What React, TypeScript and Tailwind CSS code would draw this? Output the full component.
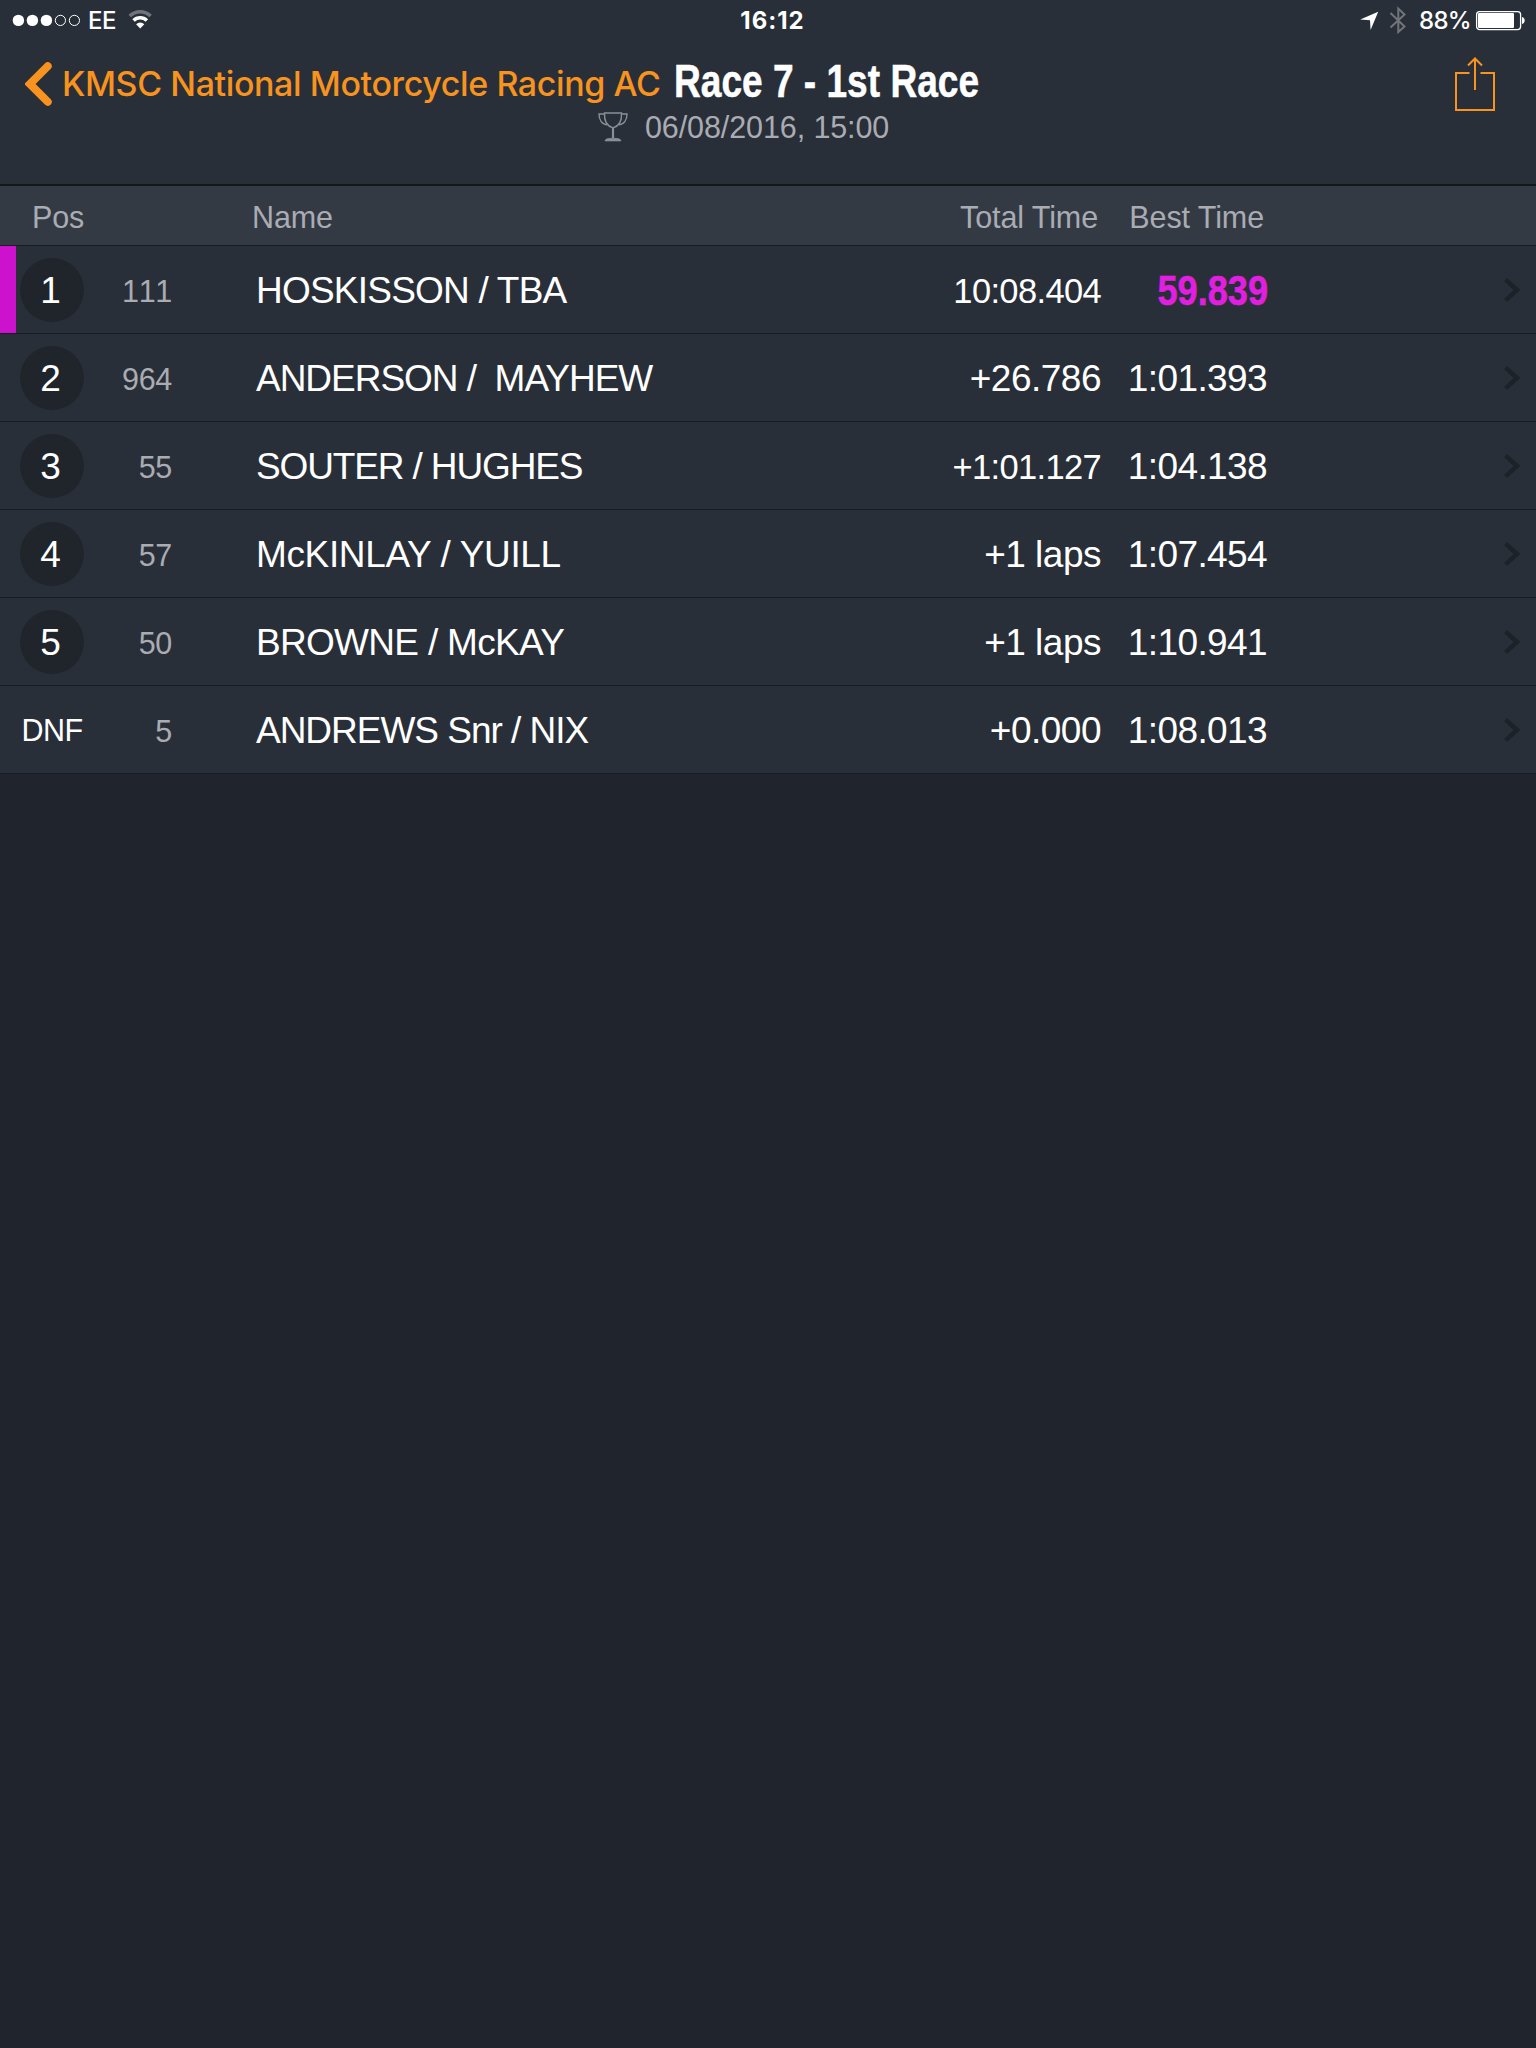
interface Result {
  pos: string;
  num: string;
  name: string;
  tracking: string;
  total: string;
  best: string;
  fastest?: boolean;
  small?: boolean;
}

const results: Result[] = [
  { pos: "1", num: "111", name: "HOSKISSON / TBA", tracking: "tracking-[-0.78px]", total: "10:08.404", best: "59.839", fastest: true, small: true },
  { pos: "2", num: "964", name: "ANDERSON /  MAYHEW", tracking: "tracking-[-1.02px]", total: "+26.786", best: "1:01.393" },
  { pos: "3", num: "55", name: "SOUTER / HUGHES", tracking: "tracking-[-1.13px]", total: "+1:01.127", best: "1:04.138", small: true },
  { pos: "4", num: "57", name: "McKINLAY / YUILL", tracking: "tracking-[-0.36px]", total: "+1 laps", best: "1:07.454" },
  { pos: "5", num: "50", name: "BROWNE / McKAY", tracking: "tracking-[-0.7px]", total: "+1 laps", best: "1:10.941" },
  { pos: "DNF", num: "5", name: "ANDREWS Snr / NIX", tracking: "tracking-[-1.02px]", total: "+0.000", best: "1:08.013" },
];

const StatusBar = () => {
  return (
    <div className="h-10 flex items-center justify-between text-white font-['Inter',sans-serif] text-[24px] leading-10">
      <div className="flex-1 flex items-center pl-3 h-10">
        <svg className="w-[70px] h-10" viewBox="0 0 70 40" fill="none">
          <circle cx="6.4" cy="20.4" r="5.7" fill="#fff" />
          <circle cx="20.4" cy="20.4" r="5.7" fill="#fff" />
          <circle cx="34.4" cy="20.4" r="5.7" fill="#fff" />
          <circle cx="48.4" cy="20.4" r="5.1" stroke="#fff" />
          <circle cx="62.4" cy="20.4" r="5.1" stroke="#fff" />
        </svg>
        <span className="ml-[6px] pt-[2px] w-[32px] font-medium tracking-[-0.4px]">EE</span>
        <svg className="ml-2 w-6 h-10" viewBox="0 0 24 40">
          <path d="M0.5 14.8 A16.5 16.5 0 0 1 23.9 14.8 L21.4 17.3 A13 13 0 0 0 3 17.3 Z" fill="#71757b" />
          <path d="M4.3 19.2 A11.2 11.2 0 0 1 20.1 19.2 L17.6 21.7 A7.8 7.8 0 0 0 6.8 21.7 Z" fill="#fff" />
          <path d="M8.1 24.3 A5.8 5.8 0 0 1 16.3 24.3 L12.2 28.6 Z" fill="#fff" />
        </svg>
      </div>
      <span className="pl-[7px] pt-[2px] font-bold tracking-[1px]">16:12</span>
      <div className="flex-1 flex items-center justify-end pr-[10px] h-10">
        <svg className="w-5 h-10" viewBox="0 0 20 40" fill="#fff">
          <path d="M18.2 11.7 L10.6 30 L10 20.3 L0.2 19.4 Z" />
        </svg>
        <svg className="ml-[9px] w-[18px] h-10" viewBox="0 0 18 40" fill="none" stroke="#71757b" strokeWidth="2">
          <path d="M1.5 13 L15.5 26.5 L9.3 32 V8.5 L15.5 14.5 L1.5 27.5" />
        </svg>
        <span className="ml-[12px] pt-[2px] w-[51px] font-medium tracking-[-0.7px]">88%</span>
        <svg className="ml-[5px] w-[51px] h-10" viewBox="0 0 51 40">
          <rect x="1.6" y="11.6" width="44" height="18" rx="3" fill="none" stroke="#fff" strokeWidth="1.3" />
          <rect x="3" y="13" width="36" height="15" rx="1" fill="#fff" />
          <path d="M47 17 C50.6 17.5 50.6 23.5 47 24 Z" fill="#fff" />
        </svg>
      </div>
    </div>
  );
};

const NavBar = () => {
  return (
    <div className="h-[144px] flex">
      <div className="flex h-[88px] pl-[25px] text-[#f7931e]">
        <svg className="w-7 h-[88px]" viewBox="0 0 28 88" fill="none" stroke="#f7931e" strokeWidth="8">
          <path d="M22.7 26.2 L5 44 L22.7 61.8" strokeLinecap="round" />
        </svg>
        <span className="ml-[9px] w-[600px] whitespace-nowrap font-['Inter',sans-serif] font-medium text-[34px] leading-[88px] tracking-[-0.4px]">
          KMSC National Motorcycle Racing AC
        </span>
      </div>
      <div className="flex-1 pt-[12px]">
        <h1 className="ml-[12px] origin-left scale-x-[0.806] whitespace-nowrap font-bold text-white text-[46px] leading-[58px] [-webkit-text-stroke:0.5px_white]">
          Race 7 - 1st Race
        </h1>
        <div className="-ml-[64px] -mt-[2px] h-[38px] flex items-center">
          <svg className="w-[30px] h-[30px]" viewBox="0 0 30 30" fill="none" stroke="#8b8f96" strokeWidth="1.4">
            <path d="M6.5 1 H23.5 C24 9 21.5 14 15 15.8 C8.5 14 6 9 6.5 1 Z" />
            <path d="M6.5 2 H1 C1 8 4 12.5 9.5 12.8 M23.5 2 H29 C29 8 26 12.5 20.5 12.8" />
            <path d="M15 15.8 V26" strokeWidth="2.2" />
            <path d="M7 29 C7.5 26.5 10 26.3 15 26.3 C20 26.3 22.5 26.5 23 29 Z" fill="#8b8f96" strokeWidth="0.6" />
          </svg>
          <span className="ml-[17px] pt-[2px] whitespace-nowrap text-[30.5px] tracking-[-0.1px] text-[#a9acb3] [font-kerning:none]">06/08/2016, 15:00</span>
        </div>
      </div>
      <svg className="mr-10 w-[42px] h-[88px]" viewBox="0 0 42 88" fill="none" stroke="#f7931e" strokeWidth="2">
        <path d="M15.5 33 H2 V70 H40 V33 H26.5" />
        <path d="M21 50 V18 M14 25.5 L21 18.5 L28 25.5" />
      </svg>
    </div>
  );
};

const Row = ({ r }: { r: Result }) => {
  return (
    <div className="h-[88px] flex items-center bg-[#292f38] border-b border-[#191c25]">
      <div className={r.fastest ? "w-4 h-[87px] bg-[#cc12cc]" : "w-4"} />
      {r.pos === "DNF" ? (
        <div className="ml-1 w-16 pt-[3px] text-center text-[30.5px] tracking-[-0.6px] text-white">DNF</div>
      ) : (
        <div className="ml-1 w-16 h-16 mt-px rounded-full bg-[#20242b] text-center text-[37px] leading-[66px] text-white">
          <span className="-ml-[3px]">{r.pos}</span>
        </div>
      )}
      <div className="w-[88px] pt-[5px] text-right text-[30.5px] tracking-[-0.3px] text-[#a9acb3] [font-kerning:none]">{r.num}</div>
      <div className={`ml-[84px] w-[600px] pt-[2px] whitespace-pre text-[37px] text-white ${r.tracking}`}>{r.name}</div>
      <div
        className={`w-[245px] text-right text-white ${r.small ? "text-[34.5px] tracking-[-0.65px] pt-[4px]" : "text-[37px] tracking-[-0.5px] pt-[2px]"}`}
      >
        {r.total}
      </div>
      {r.fastest ? (
        <div className="w-[167px] pt-[1px] origin-right scale-x-[0.86] text-right font-bold text-[42px] text-[#e21fe0] [-webkit-text-stroke:0.5px_#e21fe0]">
          {r.best}
        </div>
      ) : (
        <div className="w-[166px] pt-[2px] text-right text-[37px] tracking-[-0.6px] text-white">{r.best}</div>
      )}
      <svg className="ml-auto mr-4 w-4 h-6" viewBox="0 0 16 24" fill="none" stroke="#1d2128" strokeWidth="4.4">
        <path d="M1.6 1.6 L13 12 L1.6 22.4" />
      </svg>
    </div>
  );
};

export default function App() {
  return (
    <div className="w-[1536px] h-[2048px] overflow-hidden bg-[#20242c] font-['Liberation_Sans',Arial,sans-serif]">
      <header className="bg-[#292f38] border-b-2 border-[#14171b]">
        <StatusBar />
        <NavBar />
      </header>
      <div className="h-[60px] pt-[5px] flex items-center bg-[#343a44] border-b border-[#191c25] text-[30.5px] tracking-[-0.1px] text-[#a9acb3]">
        <div className="pl-[32px] w-[252px]">Pos</div>
        <div className="w-[600px]">Name</div>
        <div className="w-[246px] text-right">Total Time</div>
        <div className="w-[166px] text-right">Best Time</div>
      </div>
      {results.map((r) => (
        <Row key={r.pos} r={r} />
      ))}
    </div>
  );
}
